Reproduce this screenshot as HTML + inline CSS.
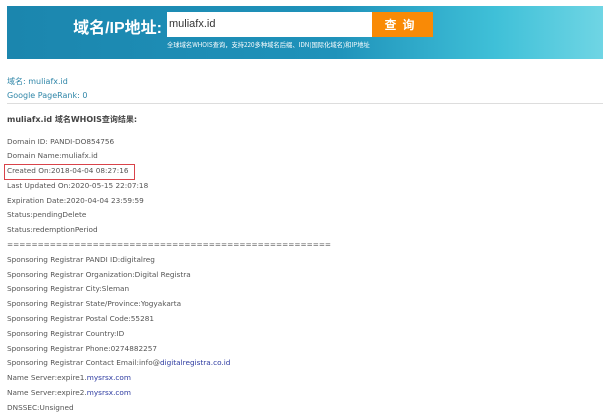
<!DOCTYPE html>
<html><head><meta charset="utf-8"><style>
body{margin:0;width:610px;height:414px;background:#fff;position:relative;overflow:hidden;font-family:"DejaVu Sans","Liberation Sans","Noto Sans CJK SC",sans-serif}
.ban{position:absolute;left:7px;top:6px;width:596px;height:53px;background:linear-gradient(90deg,#1b86ae 0%,#1f92ba 55%,#3fc0d8 82%,#6fd5e4 100%)}
.lbl{position:absolute;left:50px;top:14px;width:112px;text-align:right;color:#fff;font:bold 16px "Liberation Sans","Noto Sans CJK SC",sans-serif;white-space:nowrap}
.inp{position:absolute;left:167px;top:12px;width:205px;height:25px;background:#fff}
.inp span{position:absolute;left:2px;top:6px;font:11px "Liberation Sans",sans-serif;color:#333}
.btn{position:absolute;left:372px;top:12px;width:61px;height:25px;background:#f98a06;color:#fff;font:bold 12px "Noto Sans CJK SC",sans-serif;text-align:center;line-height:25px;letter-spacing:6px}
.sub{position:absolute;left:167px;top:40px;color:#fff;font:6.3px "Noto Sans CJK SC",sans-serif;white-space:nowrap}
.top{position:absolute;left:7px;color:#2f86a8;font:8px "DejaVu Sans","Noto Sans CJK SC",sans-serif}
.hr{position:absolute;left:7px;top:103px;width:596px;height:1px;background:#ddd}
.tt{position:absolute;left:7px;top:114px;font:bold 8px "DejaVu Sans","Noto Sans CJK SC",sans-serif;color:#444}
.lines{position:absolute;left:7px;top:134.5px;font-size:7.3px;line-height:14.8px;color:#555;white-space:nowrap}
.lines a{color:#2c3aa0;text-decoration:none}
.box{position:absolute;left:4px;top:164px;width:129px;height:14px;border:1px solid #d9434a}
</style></head><body>
<div class="ban"></div>
<div class="lbl">域名/IP地址:</div>
<div class="inp"><span>muliafx.id</span></div>
<div class="btn">查询</div>
<div class="sub">全球域名WHOIS查询，支持220多种域名后缀、IDN(国际化域名)和IP地址</div>
<div class="top" style="top:76px">域名: muliafx.id</div>
<div class="top" style="top:91px">Google PageRank: 0</div>
<div class="hr"></div>
<div class="tt">muliafx.id 域名WHOIS查询结果:</div>
<div class="box"></div>
<div class="lines">Domain ID: PANDI-DO854756<br>Domain Name:muliafx.id<br>Created On:2018-04-04 08:27:16<br>Last Updated On:2020-05-15 22:07:18<br>Expiration Date:2020-04-04 23:59:59<br>Status:pendingDelete<br>Status:redemptionPeriod<br>=====================================================<br>Sponsoring Registrar PANDI ID:digitalreg<br>Sponsoring Registrar Organization:Digital Registra<br>Sponsoring Registrar City:Sleman<br>Sponsoring Registrar State/Province:Yogyakarta<br>Sponsoring Registrar Postal Code:55281<br>Sponsoring Registrar Country:ID<br>Sponsoring Registrar Phone:0274882257<br>Sponsoring Registrar Contact Email:info@<a>digitalregistra.co.id</a><br>Name Server:expire1.<a>mysrsx.com</a><br>Name Server:expire2.<a>mysrsx.com</a><br>DNSSEC:Unsigned</div>
</body></html>
